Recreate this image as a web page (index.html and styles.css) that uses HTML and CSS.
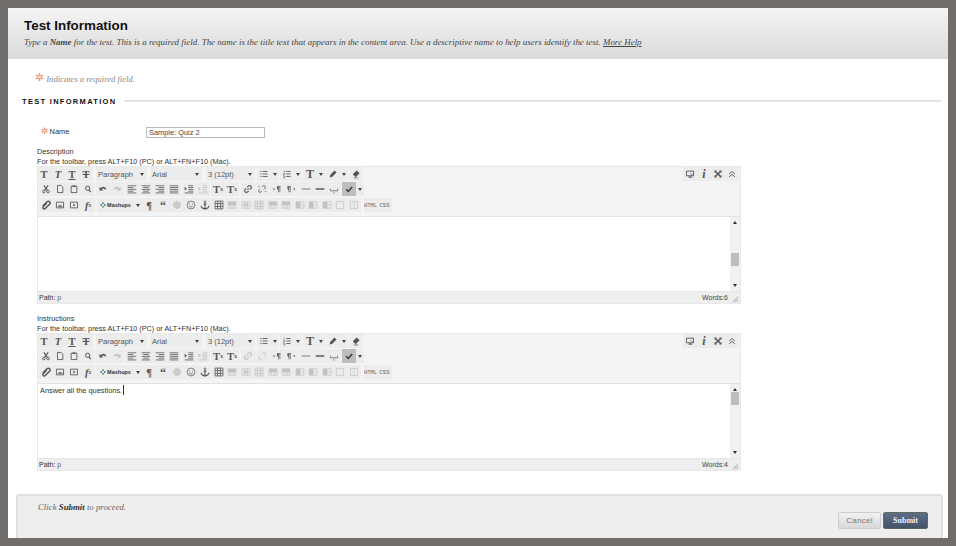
FILE: index.html
```html
<!DOCTYPE html>
<html lang="en">
<head>
    <meta charset="UTF-8">
    <title>Test Information</title>
    <link rel="stylesheet" href="styles.css">
</head>
<body>
<svg class="defs" width="0" height="0">
    <symbol id="i-list" viewBox="0 0 14 14"><path d="M5 3.500h7M5 7h7M5 10.500h7" stroke="currentColor" stroke-width="1.200"/><path d="M2 3.500h1.500M2 7h1.500M2 10.500h1.500" stroke="currentColor" stroke-width="1.600"/></symbol>
    <symbol id="i-num" viewBox="0 0 14 14"><path d="M6 3.500h6M6 7h6M6 10.500h6" stroke="currentColor" stroke-width="1.200"/><path d="M3 2v3M2 6.500h2v1.500h-2v1.500M2 10.500h2v2h-2" fill="none" stroke="currentColor" stroke-width=".8"/></symbol>
    <symbol id="i-pen" viewBox="0 0 14 14"><path d="M9 2l3 3-6 6-3.500 1 .5-3.500z" fill="currentColor"/></symbol>
    <symbol id="i-eraser" viewBox="0 0 14 14"><path d="M8 2l4 4-5.500 5.500-4-4z" fill="currentColor"/><path d="M4 12.500h6" stroke="currentColor"/></symbol>
    <symbol id="i-screen" viewBox="0 0 14 14"><path d="M2 3h10v6.500h-10z" fill="none" stroke="currentColor" stroke-width="1.300"/><path d="M7 9.500v2M5 11.500h5M8 6l3 3" stroke="currentColor" stroke-width="1.300"/></symbol>
    <symbol id="i-full" viewBox="0 0 14 14"><path d="M2 2h3.500l-1 1 2.500 2.500 2.500-2.500-1-1h3.500v3.500l-1-1-2.500 2.500 2.500 2.500 1-1v3.500h-3.500l1-1-2.500-2.500-2.500 2.500 1 1h-3.500v-3.500l1 1 2.500-2.500-2.500-2.500-1 1z" fill="currentColor"/></symbol>
    <symbol id="i-up" viewBox="0 0 14 14"><path d="M3 7l4-3.500 4 3.500M3 11l4-3.500 4 3.500" fill="none" stroke="currentColor" stroke-width="1.300"/></symbol>
    <symbol id="i-cut" viewBox="0 0 14 14"><path d="M4 2l5 7M10 2l-5 7" stroke="currentColor" stroke-width="1.500"/><circle cx="4" cy="10.500" r="1.800" fill="none" stroke="currentColor" stroke-width="1.300"/><circle cx="10" cy="10.500" r="1.800" fill="none" stroke="currentColor" stroke-width="1.300"/></symbol>
    <symbol id="i-doc" viewBox="0 0 14 14"><path d="M3.500 2h5l2.500 2.500v7.500h-7.500z" fill="none" stroke="currentColor" stroke-width="1.200"/></symbol>
    <symbol id="i-paste" viewBox="0 0 14 14"><path d="M3 3h8v9h-8z" fill="none" stroke="currentColor" stroke-width="1.200"/><path d="M5 2h4v2h-4z" fill="currentColor"/></symbol>
    <symbol id="i-find" viewBox="0 0 14 14"><circle cx="6.500" cy="6" r="3" fill="none" stroke="currentColor" stroke-width="1.400"/><path d="M8.500 8.500l2.500 3" stroke="currentColor" stroke-width="1.500"/></symbol>
    <symbol id="i-undo" viewBox="0 0 14 14"><path d="M4 6c2-3 6-3 7.500 1l-1.500 1c-1-2-3-2.500-4.500-.500l2 1.500h-5.500v-5z" fill="currentColor"/></symbol>
    <symbol id="i-redo" viewBox="0 0 14 14"><path d="M10 6c-2-3-6-3-7.500 1l1.500 1c1-2 3-2.500 4.500-.500l-2 1.500h5.500v-5z" fill="currentColor"/></symbol>
    <symbol id="i-al" viewBox="0 0 14 14"><path d="M1 2.500h12M1 5h8M1 7.500h12M1 10h8M1 12.500h12" stroke="currentColor" stroke-width="1.100"/></symbol>
    <symbol id="i-ac" viewBox="0 0 14 14"><path d="M1 2.500h12M3 5h8M1 7.500h12M3 10h8M1 12.500h12" stroke="currentColor" stroke-width="1.100"/></symbol>
    <symbol id="i-ar" viewBox="0 0 14 14"><path d="M1 2.500h12M5 5h8M1 7.500h12M5 10h8M1 12.500h12" stroke="currentColor" stroke-width="1.100"/></symbol>
    <symbol id="i-aj" viewBox="0 0 14 14"><path d="M1 2.500h12M1 5h12M1 7.500h12M1 10h12M1 12.500h12" stroke="currentColor" stroke-width="1.100"/></symbol>
    <symbol id="i-ind" viewBox="0 0 14 14"><path d="M6 2.500h7M6 5h7M6 7.500h7M6 10h7M1 12.500h12" stroke="currentColor" stroke-width="1.100"/><path d="M1 4l3 2.500-3 2.500z" fill="currentColor"/></symbol>
    <symbol id="i-link" viewBox="0 0 14 14"><path d="M6 8l2-2M6 4.500l1.500-1.500a2 2 0 0 1 3.500 3.500l-1.500 1.500M8 9.500l-1.500 1.500a2 2 0 0 1-3.500-3.500l1.500-1.500" fill="none" stroke="currentColor" stroke-width="1.500"/></symbol>
    <symbol id="i-unlink" viewBox="0 0 14 14"><path d="M7 4l1-1a2 2 0 0 1 3 3l-1.500 1.500M7 10l-1 1a2 2 0 0 1-3-3l1.500-1.500M2 3l1.500 1M11 10l1.500 1" fill="none" stroke="currentColor" stroke-width="1.200"/></symbol>
    <symbol id="i-ltr" viewBox="0 0 14 14"><path d="M7 3.500h5M9 3.500v8M11 3.500v8" stroke="currentColor"/><path d="M9 3.500a2.200 2.200 0 0 0 0 4.500z" fill="currentColor"/><path d="M2 5.500l2.500 1.500-2.500 1.500z" fill="currentColor"/></symbol>
    <symbol id="i-rtl" viewBox="0 0 14 14"><path d="M2 3.500h5M4 3.500v8M6 3.500v8" stroke="currentColor"/><path d="M4 3.500a2.200 2.200 0 0 0 0 4.500z" fill="currentColor"/><path d="M12.500 5.500l-2.500 1.500 2.500 1.500z" fill="currentColor"/></symbol>
    <symbol id="i-hr" viewBox="0 0 14 14"><path d="M1 7h12" stroke="currentColor"/></symbol>
    <symbol id="i-hr2" viewBox="0 0 14 14"><path d="M1 7h12" stroke="currentColor" stroke-width="2"/></symbol>
    <symbol id="i-nbsp" viewBox="0 0 14 14"><path d="M2 6.500v3h10v-3" fill="none" stroke="currentColor"/><path d="M6 12.500h2" stroke="currentColor"/></symbol>
    <symbol id="i-check" viewBox="0 0 14 14"><path d="M3 7.500l3 3 5.500-6.500" fill="none" stroke="currentColor" stroke-width="2"/></symbol>
    <symbol id="i-clip" viewBox="0 0 14 14"><path d="M2.500 8.500l6-6a2.400 2.400 0 0 1 3.500 3.500l-6 6a1.800 1.800 0 0 1-3-2.500l5-5" fill="none" stroke="currentColor" stroke-width="2"/></symbol>
    <symbol id="i-img" viewBox="0 0 14 14"><path d="M2 3h10v8h-10z" fill="none" stroke="currentColor" stroke-width="1.200"/><path d="M3.500 9.500l3-3 2 2 1-1 1.500 2z" fill="currentColor"/></symbol>
    <symbol id="i-media" viewBox="0 0 14 14"><path d="M2 3h10v8h-10z" fill="none" stroke="currentColor" stroke-width="1.200"/><path d="M6 5l3 2-3 2z" fill="currentColor"/></symbol>
    <symbol id="i-mash" viewBox="0 0 10 10"><circle cx="5" cy="2" r="1.500" fill="#3a8a3a"/><circle cx="2" cy="5" r="1.500" fill="#3a6fb0"/><circle cx="8" cy="5" r="1.500" fill="#3a6fb0"/><circle cx="5" cy="8" r="1.500" fill="#3a8a3a"/></symbol>
    <symbol id="i-copy" viewBox="0 0 14 14"><circle cx="7" cy="7" r="4.500" fill="none" stroke="currentColor"/><circle cx="7" cy="7" r="2" fill="none" stroke="currentColor"/></symbol>
    <symbol id="i-smile" viewBox="0 0 14 14"><circle cx="7" cy="7" r="5.500" fill="none" stroke="currentColor"/><path d="M4.500 8.500c1 1.500 4 1.500 5 0" fill="none" stroke="currentColor"/><path d="M5 5v1.500M9 5v1.500" stroke="currentColor"/></symbol>
    <symbol id="i-anchor" viewBox="0 0 14 14"><circle cx="7" cy="2.500" r="1.300" fill="none" stroke="currentColor"/><path d="M7 4v8.500M5 6h4M1.500 8c0 2.500 3 4.500 5.500 4.500s5.500-2 5.500-4.500" fill="none" stroke="currentColor" stroke-width="1.500"/></symbol>
    <symbol id="i-table" viewBox="0 0 14 14"><path d="M1.500 1.500h11v11h-11zM1.500 5h11M1.500 9h11M5 1.500v11M9 1.500v11" fill="none" stroke="currentColor" stroke-width="1.100"/></symbol>
    <symbol id="i-trow" viewBox="0 0 14 14"><path d="M1.500 2.500h11v9h-11zM1.500 7h11M5 7v4.500M9 7v4.500" fill="none" stroke="currentColor"/><path d="M1.500 2.500h11v4.500h-11z" fill="currentColor"/></symbol>
    <symbol id="i-tcell" viewBox="0 0 14 14"><path d="M1.500 2.500h11v9h-11zM5 2.500v9M9 2.500v9M1.500 7h3.500M9 7h3.500" fill="none" stroke="currentColor"/><path d="M5.500 5h3v4h-3z" fill="currentColor"/></symbol>
    <symbol id="i-tcol" viewBox="0 0 14 14"><path d="M1.500 2.500h11v9h-11zM1.500 7h11M7 2.500v9" fill="none" stroke="currentColor"/><path d="M1.500 2.500h5.500v9h-5.500z" fill="currentColor"/></symbol>
    <symbol id="i-box" viewBox="0 0 14 14"><path d="M2 2h10v10h-10z" fill="none" stroke="currentColor"/></symbol>
    <symbol id="i-split" viewBox="0 0 14 14"><path d="M2 2h10v10h-10zM7 2v10" fill="none" stroke="currentColor"/></symbol>
    <symbol id="i-grip" viewBox="0 0 8 8"><path d="M1 7l6-6M3.500 7l3.500-3.500M6 7l1-1" stroke="#888" stroke-width=".8"/></symbol>
</svg>

<div class="page">
    <div class="page-head">
        <h1>Test Information</h1>
        <p>Type a <b>Name</b> for the test. This is a required field. The name is the title text that appears in the content area. Use a descriptive name to help users identify the test. <a href="#">More Help</a></p>
    </div>

    <p class="req-note"><span class="star star-lg">&#10034;</span> Indicates a required field.</p>

    <div class="section-title"><h2>TEST INFORMATION</h2><span class="rule"></span></div>

    <div class="name-row">
        <label><span class="star">&#10034;</span><span>Name</span></label>
        <input type="text" value="Sample: Quiz 2">
    </div>

    <div class="field">
        <div class="field-label">Description</div>
        <div class="field-hint">For the toolbar, press ALT+F10 (PC) or ALT+FN+F10 (Mac).</div>
        <div class="editor">
            <div class="toolbar">
                <div class="row row-first">
                    <div class="grp"><span class="tb serif">T</span><span class="tb serif it">T</span><span class="tb serif un">T</span><span class="tb serif st">T</span></div>
                    <div class="sel sel-a">Paragraph<i></i></div>
                    <div class="sel sel-b">Arial<i></i></div>
                    <div class="sel sel-c">3 (12pt)<i></i></div>
                    <div class="grp"><span class="tb"><svg><use href="#i-list"/></svg></span><span class="ar"><i></i></span></div>
                    <div class="grp"><span class="tb"><svg><use href="#i-num"/></svg></span><span class="ar"><i></i></span></div>
                    <div class="grp"><span class="tb serif big">T</span><span class="ar"><i></i></span></div>
                    <div class="grp"><span class="tb"><svg><use href="#i-pen"/></svg></span><span class="ar"><i></i></span></div>
                    <div class="grp grp-tight"><span class="tb"><svg><use href="#i-eraser"/></svg></span></div>
                    <div class="grp grp-right"><span class="tb"><svg><use href="#i-screen"/></svg></span><span class="tb serif it big">i</span><span class="tb"><svg><use href="#i-full"/></svg></span><span class="tb"><svg><use href="#i-up"/></svg></span></div>
                </div>
                <div class="row">
                    <div class="grp"><span class="tb"><svg><use href="#i-cut"/></svg></span><span class="tb"><svg><use href="#i-doc"/></svg></span><span class="tb"><svg><use href="#i-paste"/></svg></span><span class="tb"><svg><use href="#i-find"/></svg></span></div>
                    <div class="grp"><span class="tb"><svg><use href="#i-undo"/></svg></span><span class="tb off"><svg><use href="#i-redo"/></svg></span></div>
                    <div class="grp"><span class="tb"><svg><use href="#i-al"/></svg></span><span class="tb"><svg><use href="#i-ac"/></svg></span><span class="tb"><svg><use href="#i-ar"/></svg></span><span class="tb"><svg><use href="#i-aj"/></svg></span></div>
                    <div class="grp"><span class="tb"><svg><use href="#i-ind"/></svg></span><span class="tb off"><svg><use href="#i-ind"/></svg></span></div>
                    <div class="grp"><span class="tb serif">T<sup>x</sup></span><span class="tb serif">T<sub>x</sub></span></div>
                    <div class="grp grp-wide"><span class="tb"><svg><use href="#i-link"/></svg></span><span class="tb"><svg><use href="#i-unlink"/></svg></span></div>
                    <div class="grp"><span class="tb"><svg><use href="#i-ltr"/></svg></span><span class="tb"><svg><use href="#i-rtl"/></svg></span></div>
                    <div class="grp"><span class="tb"><svg><use href="#i-hr"/></svg></span><span class="tb"><svg><use href="#i-hr2"/></svg></span><span class="tb"><svg><use href="#i-nbsp"/></svg></span></div>
                    <div class="grp"><span class="tb tb-on"><svg><use href="#i-check"/></svg></span><span class="ar"><i></i></span></div>
                </div>
                <div class="row row-last">
                    <div class="grp"><span class="tb"><svg><use href="#i-clip"/></svg></span><span class="tb"><svg><use href="#i-img"/></svg></span><span class="tb"><svg><use href="#i-media"/></svg></span><span class="tb serif it">f<sub>x</sub></span></div>
                    <div class="grp grp-mash"><span class="mash"><svg><use href="#i-mash"/></svg>Mashups</span><span class="ar"><i></i></span></div>
                    <div class="grp grp-tight"><span class="tb serif">&para;</span><span class="tb serif big quote">&ldquo;</span><span class="tb off-soft"><svg><use href="#i-copy"/></svg></span><span class="tb"><svg><use href="#i-smile"/></svg></span><span class="tb"><svg><use href="#i-anchor"/></svg></span></div>
                    <div class="grp grp-tight tbl"><span class="tb"><svg><use href="#i-table"/></svg></span><span class="tb off"><svg><use href="#i-trow"/></svg></span><span class="tb off"><svg><use href="#i-tcell"/></svg></span><span class="tb off"><svg><use href="#i-table"/></svg></span><span class="tb off"><svg><use href="#i-trow"/></svg></span><span class="tb off"><svg><use href="#i-trow"/></svg></span><span class="tb off"><svg><use href="#i-tcol"/></svg></span><span class="tb off"><svg><use href="#i-tcol"/></svg></span><span class="tb off"><svg><use href="#i-tcol"/></svg></span><span class="tb off"><svg><use href="#i-box"/></svg></span><span class="tb off"><svg><use href="#i-split"/></svg></span></div>
                    <div class="grp grp-code"><span class="code">HTML</span><span class="code">CSS</span></div>
                </div>
            </div>
            <div class="edit-area">
                <div class="edit-text"></div>
                <div class="scroll"><span class="up"></span><span class="thumb thumb-desc"></span><span class="down"></span></div>
            </div>
            <div class="status"><span><b>Path:</b> p</span><span class="words">Words:6</span><svg class="grip"><use href="#i-grip"/></svg></div>
        </div>
    </div>

    <div class="field field-second">
        <div class="field-label">Instructions</div>
        <div class="field-hint">For the toolbar, press ALT+F10 (PC) or ALT+FN+F10 (Mac).</div>
        <div class="editor">
            <div class="toolbar">
                <div class="row row-first">
                    <div class="grp"><span class="tb serif">T</span><span class="tb serif it">T</span><span class="tb serif un">T</span><span class="tb serif st">T</span></div>
                    <div class="sel sel-a">Paragraph<i></i></div>
                    <div class="sel sel-b">Arial<i></i></div>
                    <div class="sel sel-c">3 (12pt)<i></i></div>
                    <div class="grp"><span class="tb"><svg><use href="#i-list"/></svg></span><span class="ar"><i></i></span></div>
                    <div class="grp"><span class="tb"><svg><use href="#i-num"/></svg></span><span class="ar"><i></i></span></div>
                    <div class="grp"><span class="tb serif big">T</span><span class="ar"><i></i></span></div>
                    <div class="grp"><span class="tb"><svg><use href="#i-pen"/></svg></span><span class="ar"><i></i></span></div>
                    <div class="grp grp-tight"><span class="tb"><svg><use href="#i-eraser"/></svg></span></div>
                    <div class="grp grp-right"><span class="tb"><svg><use href="#i-screen"/></svg></span><span class="tb serif it big">i</span><span class="tb"><svg><use href="#i-full"/></svg></span><span class="tb"><svg><use href="#i-up"/></svg></span></div>
                </div>
                <div class="row">
                    <div class="grp"><span class="tb"><svg><use href="#i-cut"/></svg></span><span class="tb"><svg><use href="#i-doc"/></svg></span><span class="tb"><svg><use href="#i-paste"/></svg></span><span class="tb"><svg><use href="#i-find"/></svg></span></div>
                    <div class="grp"><span class="tb"><svg><use href="#i-undo"/></svg></span><span class="tb off"><svg><use href="#i-redo"/></svg></span></div>
                    <div class="grp"><span class="tb"><svg><use href="#i-al"/></svg></span><span class="tb"><svg><use href="#i-ac"/></svg></span><span class="tb"><svg><use href="#i-ar"/></svg></span><span class="tb"><svg><use href="#i-aj"/></svg></span></div>
                    <div class="grp"><span class="tb"><svg><use href="#i-ind"/></svg></span><span class="tb off"><svg><use href="#i-ind"/></svg></span></div>
                    <div class="grp"><span class="tb serif">T<sup>x</sup></span><span class="tb serif">T<sub>x</sub></span></div>
                    <div class="grp grp-wide"><span class="tb off"><svg><use href="#i-link"/></svg></span><span class="tb off"><svg><use href="#i-unlink"/></svg></span></div>
                    <div class="grp"><span class="tb"><svg><use href="#i-ltr"/></svg></span><span class="tb"><svg><use href="#i-rtl"/></svg></span></div>
                    <div class="grp"><span class="tb"><svg><use href="#i-hr"/></svg></span><span class="tb"><svg><use href="#i-hr2"/></svg></span><span class="tb"><svg><use href="#i-nbsp"/></svg></span></div>
                    <div class="grp"><span class="tb tb-on"><svg><use href="#i-check"/></svg></span><span class="ar"><i></i></span></div>
                </div>
                <div class="row row-last">
                    <div class="grp"><span class="tb"><svg><use href="#i-clip"/></svg></span><span class="tb"><svg><use href="#i-img"/></svg></span><span class="tb"><svg><use href="#i-media"/></svg></span><span class="tb serif it">f<sub>x</sub></span></div>
                    <div class="grp grp-mash"><span class="mash"><svg><use href="#i-mash"/></svg>Mashups</span><span class="ar"><i></i></span></div>
                    <div class="grp grp-tight"><span class="tb serif">&para;</span><span class="tb serif big quote">&ldquo;</span><span class="tb off-soft"><svg><use href="#i-copy"/></svg></span><span class="tb"><svg><use href="#i-smile"/></svg></span><span class="tb"><svg><use href="#i-anchor"/></svg></span></div>
                    <div class="grp grp-tight tbl"><span class="tb"><svg><use href="#i-table"/></svg></span><span class="tb off"><svg><use href="#i-trow"/></svg></span><span class="tb off"><svg><use href="#i-tcell"/></svg></span><span class="tb off"><svg><use href="#i-table"/></svg></span><span class="tb off"><svg><use href="#i-trow"/></svg></span><span class="tb off"><svg><use href="#i-trow"/></svg></span><span class="tb off"><svg><use href="#i-tcol"/></svg></span><span class="tb off"><svg><use href="#i-tcol"/></svg></span><span class="tb off"><svg><use href="#i-tcol"/></svg></span><span class="tb off"><svg><use href="#i-box"/></svg></span><span class="tb off"><svg><use href="#i-split"/></svg></span></div>
                    <div class="grp grp-code"><span class="code">HTML</span><span class="code">CSS</span></div>
                </div>
            </div>
            <div class="edit-area">
                <div class="edit-text">Answer all the questions.<span class="caret"></span></div>
                <div class="scroll"><span class="up"></span><span class="thumb thumb-inst"></span><span class="down"></span></div>
            </div>
            <div class="status"><span><b>Path:</b> p</span><span class="words">Words:4</span><svg class="grip"><use href="#i-grip"/></svg></div>
        </div>
    </div>

    <div class="submit-bar">
        <p>Click <b>Submit</b> to proceed.</p>
        <div class="actions">
            <button class="btn btn-cancel">Cancel</button>
            <button class="btn btn-submit">Submit</button>
        </div>
    </div>
</div>
</body>
</html>
```

FILE: styles.css
```css
html, body {
    height: 546px;
    overflow: hidden;
}

body {
    margin: 0;
    padding: 8px;
    box-sizing: border-box;
    background: #716d6b;
    font-family: "Liberation Sans", Arial, sans-serif;
    color: #333;
}

.defs {
    position: absolute;
}

.page {
    width: 940px;
    height: 530px;
    background: white;
    overflow: hidden;
}

.page-head {
    height: 51px;
    box-sizing: border-box;
    padding: 9px 16px 0;
    background: linear-gradient(to bottom, #f5f5f5, #dadada);
}

.page-head h1 {
    margin: 0;
    font-size: 13.4px;
    line-height: 17px;
    color: #111;
}

.page-head p {
    margin: 2px 0 0;
    font-family: "Liberation Serif", serif;
    font-style: italic;
    font-size: 8.95px;
    line-height: 13px;
    color: #444;
}

.page-head a {
    color: #444;
}

.req-note {
    margin: 14px 0 0 27px;
    display: flex;
    align-items: center;
    gap: 2px;
    font-family: "Liberation Serif", serif;
    font-style: italic;
    font-size: 8.6px;
    line-height: 13px;
    color: #888;
}

.star {
    color: #f08a60;
    font-style: normal;
    font-family: "DejaVu Sans", sans-serif;
    font-size: 9px;
}

.star-lg {
    font-size: 11px;
    margin-top: -4px;
}

.section-title {
    display: flex;
    align-items: center;
    margin: 9px 7px 0 14px;
    height: 12px;
}

.section-title h2 {
    margin: 0;
    font-size: 7.5px;
    letter-spacing: 1.3px;
    color: #111;
}

.rule {
    flex: 1;
    height: 2px;
    margin-left: 8px;
    background: #e4e4e4;
}

.name-row {
    display: flex;
    align-items: center;
    height: 12px;
    margin: 19px 0 0 29px;
    font-size: 7.4px;
}

.name-row label {
    display: flex;
    align-items: center;
    gap: 1px;
    width: 109px;
    padding-left: 4px;
    padding-bottom: 2px;
    box-sizing: border-box;
}

.name-row input {
    width: 119px;
    height: 11px;
    box-sizing: border-box;
    padding: 0 2px;
    border: 1px solid #bbb;
    font: 7.4px "Liberation Sans", Arial, sans-serif;
    color: #444;
}

.field {
    margin: 9px 0 0 29px;
    width: 704px;
}

.field-second {
    margin-top: 10px;
}

.field-label, .field-hint {
    font-size: 7.3px;
    line-height: 10px;
    color: #333;
}

.editor {
    margin-top: -1px;
    background: #f4f4f4;
    border: 1px solid #e8e8e8;
    box-sizing: border-box;
    height: 138px;
    display: flex;
    flex-direction: column;
}

.toolbar {
    height: 50px;
    box-sizing: border-box;
    border-bottom: 1px solid #e2e2e2;
}

.row {
    display: flex;
    height: 14px;
    margin-bottom: 1px;
    padding-left: 1px;
}

.row-first {
    margin-left: -1px;
    padding-left: 0;
    padding-right: 1px;
}

.row-last {
    margin-top: 2px;
}

.grp {
    display: flex;
    margin-right: 1px;
    background: #ececec;
}

.grp-tight {
    margin-right: 0;
}

.grp-wide {
    margin-left: 1px;
}

.grp-right {
    margin-left: auto;
    margin-right: 0;
}

.grp-right svg {
    width: 12px;
    height: 12px;
}

.grp-mash {
    margin-left: 1px;
    margin-right: 0;
}

.tb {
    width: 14px;
    height: 14px;
    display: flex;
    align-items: center;
    justify-content: center;
    color: #555;
    font-size: 10.5px;
    font-weight: bold;
}

.tb svg {
    width: 10px;
    height: 10px;
}

.serif {
    font-family: "Liberation Serif", serif;
}

.it {
    font-style: italic;
}

.un {
    text-decoration: underline;
}

.st {
    text-decoration: line-through;
}

.big {
    font-size: 12px;
}

.quote {
    padding-top: 3px;
    box-sizing: border-box;
}

.tb sup, .tb sub {
    font-size: 5.5px;
    line-height: 0;
}

.off {
    color: #c2c2c2;
}

.off-soft {
    color: #999;
}

.tb-on {
    background: #bdbdbd;
    color: #333;
}

.ar {
    width: 8px;
    height: 14px;
    display: flex;
    align-items: center;
    justify-content: center;
}

.ar i, .sel i {
    width: 0;
    height: 0;
    border-left: 2px solid transparent;
    border-right: 2px solid transparent;
    border-top: 3px solid #444;
}

.sel {
    display: flex;
    align-items: center;
    justify-content: space-between;
    box-sizing: border-box;
    height: 14px;
    padding: 0 3px 0 2px;
    background: #ececec;
    font-size: 7.5px;
    color: #555;
}

.sel-a {
    width: 51px;
    margin-left: 2px;
}

.sel-b {
    width: 52px;
    margin-left: 3px;
}

.sel-c {
    width: 49px;
    margin: 0 2px 0 4px;
}

.mash {
    width: 37px;
    display: flex;
    align-items: center;
    justify-content: center;
    gap: 1px;
    font-size: 5.5px;
    font-weight: bold;
    color: #333;
}

.mash svg {
    width: 6px;
    height: 6px;
}

.tbl .tb {
    width: 13.5px;
}

.grp-code {
    margin-left: 3px;
}

.code {
    width: 14px;
    display: flex;
    align-items: center;
    justify-content: center;
    font-family: "Liberation Mono", monospace;
    font-size: 5.5px;
    color: #666;
}

.edit-area {
    height: 75px;
    display: flex;
    background: white;
}

.edit-text {
    flex: 1;
    padding: 1px 2px;
    font-size: 7.4px;
    line-height: 11px;
    color: #333;
}

.caret {
    display: inline-block;
    width: 1px;
    height: 10px;
    margin-left: 1px;
    vertical-align: top;
    background: #333;
}

.scroll {
    width: 10px;
    display: flex;
    flex-direction: column;
    align-items: center;
    background: #f1f1f1;
}

.up, .down {
    width: 0;
    height: 0;
    border-left: 2px solid transparent;
    border-right: 2px solid transparent;
}

.up {
    margin-top: 4px;
    border-bottom: 3px solid #333;
}

.down {
    margin-top: auto;
    margin-bottom: 4px;
    border-top: 3px solid #333;
}

.thumb {
    width: 8px;
    height: 13px;
    background: #bdbdbd;
}

.thumb-desc {
    margin-top: 29px;
}

.thumb-inst {
    margin-top: 1px;
}

.status {
    flex: 1;
    display: flex;
    align-items: center;
    padding-left: 1px;
    background: #eeeeee;
    font-size: 7px;
    color: #666;
    border-top: 1px solid #e6e6e6;
}

.status b {
    font-weight: normal;
    color: #333;
}

.words {
    margin-left: auto;
    margin-right: 4px;
    color: #444;
}

.grip {
    width: 7px;
    height: 7px;
    margin: 4px 1px 0 0;
}

.submit-bar {
    display: flex;
    justify-content: space-between;
    box-sizing: border-box;
    height: 60px;
    margin: 23px 5px 0 8px;
    padding: 5px 13px 0 20px;
    background: #eeeeee;
    border: 2px solid #e0e0e0;
    border-bottom: none;
    border-radius: 3px 3px 0 0;
}

.submit-bar p {
    margin: 0;
    font-family: "Liberation Serif", serif;
    font-style: italic;
    font-size: 8.8px;
    line-height: 12px;
    color: #666;
}

.submit-bar b {
    color: #333;
}

.actions {
    display: flex;
    gap: 2px;
    padding-top: 11px;
}

.btn {
    height: 17px;
    padding: 0;
    font: bold 8px "Liberation Serif", serif;
    border-radius: 2px;
}

.btn-cancel {
    width: 43px;
    font-family: "Liberation Sans", Arial, sans-serif;
    font-weight: normal;
    letter-spacing: .3px;
    color: #777;
    background: linear-gradient(to bottom, #f2f2f2, #d8d8d8);
    border: 1px solid #ccc;
}

.btn-submit {
    width: 45px;
    color: #eef;
    background: linear-gradient(to bottom, #5d6d85, #45546b);
    border: 1px solid #5b6b5b;
}
```
